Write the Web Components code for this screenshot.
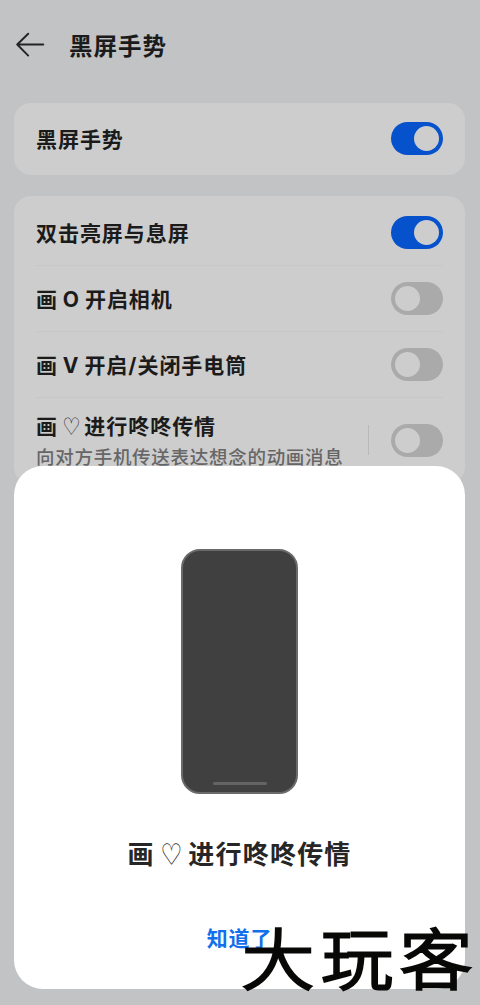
<!DOCTYPE html>
<html lang="zh-CN">
<head>
<meta charset="utf-8">
<title>黑屏手势</title>
<style>
html,body{margin:0;height:100%;overflow:hidden}
body{font-family:"Noto Sans CJK SC",sans-serif;color:#1b1b1b}
</style>
</head>
<body>
<gesture-page></gesture-page>
<script>
const define = (name, html) => customElements.define(name, class extends HTMLElement {
  constructor() {
    super();
    const t = document.createElement('template');
    t.innerHTML = html;
    this.attachShadow({mode: 'open'}).appendChild(t.content.cloneNode(true));
  }
});

define('toggle-switch', `<style>
:host{display:flex;align-items:center;box-sizing:border-box;width:52px;height:33px;padding:0 4px;border-radius:17px;background:#aaa;flex:none}
:host([on]){justify-content:flex-end;background:#0552cc}
i{width:25px;height:25px;border-radius:50%;background:#cdcdcd}
</style><i></i>`);

define('top-bar', `<style>
:host{display:flex;align-items:center;height:90px;padding-left:16px}
svg{display:block;width:29px;height:26px;margin-right:24px}
h1{margin:0;font-size:23.5px;line-height:36px;font-weight:700;letter-spacing:1px}
</style><svg viewBox="0 0 29 26" fill="none" stroke="#242424" stroke-width="1.9" stroke-linecap="round" stroke-linejoin="round"><path d="M27.3 12.5H1.2M12.2 1.7L1.2 12.5L12.2 23.6"/></svg><h1><slot></slot></h1>`);

define('settings-card', `<style>
:host{display:block;border-radius:17px;background:#cdcdcd;padding:0 22px}
</style><slot></slot>`);

define('setting-row', `<style>
:host{display:flex;align-items:center;box-sizing:border-box;height:66px;border-bottom:1px solid #c7c7c7}
:host([plain]){height:72px;border:0;padding-bottom:1px}
:host([first]){height:70px;padding-top:3px}
:host([detail]){height:86px;border:0;padding-bottom:2px}
.copy{flex:1;white-space:nowrap;padding-top:2px}
.title{font-family:Inter,"Noto Sans CJK SC",sans-serif;font-size:21px;line-height:30px;font-weight:700;letter-spacing:.95px;word-spacing:-1px}
:host([first]) .copy{padding-top:3px}
.sub{font-size:18.5px;line-height:28px;color:#666;font-weight:500;letter-spacing:.72px}
:host([detail]) .copy{padding:2px 0 0}
.rule{display:none;width:1px;height:30px;background:#b9b9b9;margin-right:22px}
:host([detail]) .rule{display:block}
</style><div class="copy"><div class="title"><slot></slot></div><div class="sub"><slot name="sub"></slot></div></div><span class="rule"></span><slot name="action"></slot>`);

define('phone-preview', `<style>
:host{display:flex;align-items:flex-end;justify-content:center;box-sizing:border-box;width:117px;height:245px;border:2px solid #686b6a;border-radius:19px;background:#404040;padding-bottom:7px}
i{width:54px;height:3px;border-radius:2px;background:#646464}
</style><i></i>`);

define('tip-sheet', `<style>
:host{display:flex;flex-direction:column;align-items:center;box-sizing:border-box;border-radius:29px;background:#fff;padding-top:83px}
h2{margin:39px 0 0;font-size:26px;line-height:40px;font-weight:700;letter-spacing:1.2px;word-spacing:-.5px;white-space:nowrap;color:#262626}
button{margin:48px 0 0;padding:0;border:0;background:none;font:700 21px/32px "Noto Sans CJK SC",sans-serif;letter-spacing:.8px;color:#1270ec}
</style><phone-preview></phone-preview><h2><slot></slot></h2><button><slot name="action"></slot></button>`);

define('site-mark', `<style>
:host{display:block;font-size:72px;line-height:84px;color:#080806;font-weight:300;-webkit-text-stroke:3.2px #080806;stroke-linejoin:round;white-space:nowrap;letter-spacing:7px;text-shadow:0 0 1px #cfc79a;transform:scaleY(.91)}
</style><slot></slot>`);

define('gesture-page', `<style>
:host{display:block;position:relative;width:480px;height:1005px;overflow:hidden;background:#c1c3c5}
main{display:flex;flex-direction:column;gap:21px;padding:13px 15px 0 14px}
tip-sheet{position:absolute;left:14px;top:466px;width:451px;height:523px}
site-mark{position:absolute;left:242px;top:914px;width:237px}
.heart{display:inline-block;font-family:"DejaVu Sans",sans-serif;font-size:.88em;font-weight:400;line-height:1;letter-spacing:0;transform:translateY(-1px) scale(1.1,1.3)}
</style>
<top-bar>黑屏手势</top-bar>
<main>
<settings-card><setting-row plain>黑屏手势<toggle-switch slot="action" on></toggle-switch></setting-row></settings-card>
<settings-card>
<setting-row first>双击亮屏与息屏<toggle-switch slot="action" on></toggle-switch></setting-row>
<setting-row>画 O 开启相机<toggle-switch slot="action"></toggle-switch></setting-row>
<setting-row>画 V 开启/关闭手电筒<toggle-switch slot="action"></toggle-switch></setting-row>
<setting-row detail>画 <span class="heart">♡</span> 进行咚咚传情<span slot="sub">向对方手机传送表达想念的动画消息</span><toggle-switch slot="action"></toggle-switch></setting-row>
</settings-card>
</main>
<tip-sheet>画 <span class="heart">♡</span> 进行咚咚传情<span slot="action">知道了</span></tip-sheet>
<site-mark>大玩客</site-mark>`);
</script>
</body>
</html>
